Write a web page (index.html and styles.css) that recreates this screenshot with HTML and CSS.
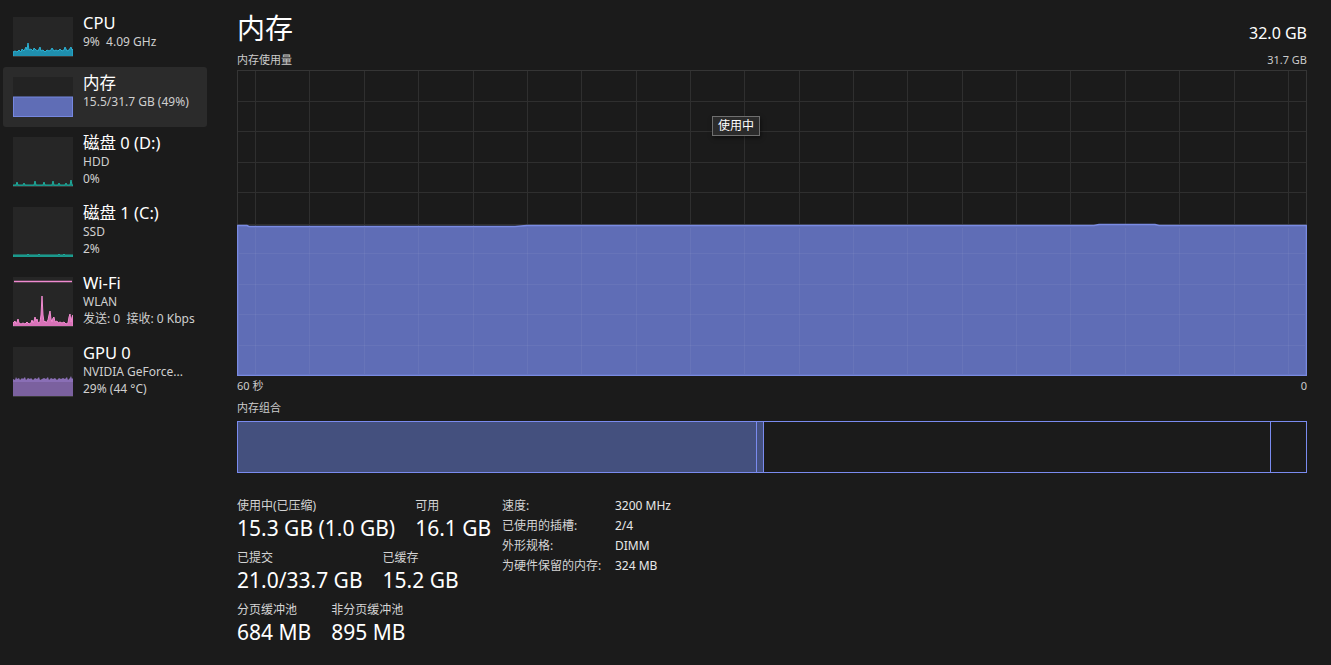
FILE: index.html
```html
<!DOCTYPE html>
<html lang="zh-CN">
<head>
<meta charset="utf-8">
<title>任务管理器 - 内存</title>
<link rel="stylesheet" href="styles.css">
</head>
<body>
<div class="app">
  <nav class="sidebar">
    <div class="item">
      <svg class="thumb" width="60" height="40" viewBox="0 0 60 40">
        <rect x="0" y="0" width="60" height="40" fill="#262626"/>
        <path d="M0,40 L0,35 L2,34 L4,35 L6,33 L8,35 L9,32 L11,34 L13,30 L14,33 L15,26 L16,33 L18,32 L20,34 L21,31 L23,33 L25,34 L27,30 L28,34 L30,33 L32,35 L34,33 L36,34 L38,33 L39,31 L41,34 L43,33 L45,34 L47,32 L49,34 L51,33 L52,30 L54,34 L56,33 L58,30 L59,33 L60,32 L60,40 Z" fill="#1f8fae" stroke="#2cb2d4" stroke-width="1"/>
        <line x1="0" y1="39.5" x2="60" y2="39.5" stroke="#3a3a3a"/>
      </svg>
      <div class="info">
        <div class="name">CPU</div>
        <div class="sub">9%&nbsp; 4.09 GHz</div>
      </div>
    </div>
    <div class="item selected">
      <svg class="thumb" width="60" height="40" viewBox="0 0 60 40">
        <rect x="0" y="0" width="60" height="40" fill="#232323"/>
        <rect x="0.5" y="20" width="59" height="19.5" fill="#5f6db6" stroke="#7587e0" stroke-width="1"/>
      </svg>
      <div class="info">
        <div class="name">内存</div>
        <div class="sub">15.5/31.7 GB (49%)</div>
      </div>
    </div>
    <div class="item tall">
      <svg class="thumb" width="60" height="50" viewBox="0 0 60 50">
        <rect x="0" y="0" width="60" height="50" fill="#262626"/>
        <path d="M0,50 L0,48 L3,48 L4,45 L5,48 L10,48 L11,46 L12,48 L21,48 L22,44 L23,48 L30,48 L31,45 L32,48 L39,48 L40,44 L41,48 L45,48 L46,46 L47,48 L52,48 L53,46 L54,48 L57,48 L58,43 L59,48 L60,48 L60,50 Z" fill="#168a80" stroke="#1fa899" stroke-width="1"/>
        <line x1="0" y1="49.5" x2="60" y2="49.5" stroke="#3a3a3a"/>
      </svg>
      <div class="info">
        <div class="name">磁盘 0 (D:)</div>
        <div class="sub">HDD</div>
        <div class="sub">0%</div>
      </div>
    </div>
    <div class="item tall">
      <svg class="thumb" width="60" height="50" viewBox="0 0 60 50">
        <rect x="0" y="0" width="60" height="50" fill="#262626"/>
        <path d="M0,50 L0,48 L14,48 L15,47 L16,48 L25,48 L26,47 L27,48 L45,48 L46,47 L47,48 L50,48 L51,47 L52,48 L60,48 L60,50 Z" fill="#168a80" stroke="#1fa899" stroke-width="1"/>
      </svg>
      <div class="info">
        <div class="name">磁盘 1 (C:)</div>
        <div class="sub">SSD</div>
        <div class="sub">2%</div>
      </div>
    </div>
    <div class="item tall">
      <svg class="thumb" width="60" height="50" viewBox="0 0 60 50">
        <rect x="0" y="0" width="60" height="50" fill="#262626"/>
        <line x1="1" y1="4.5" x2="59" y2="4.5" stroke="#f08ad0" stroke-width="1.5"/>
        <path d="M0,50 L0,46 L2,44 L3,47 L4,45 L5,42 L6,46 L8,47 L10,46 L12,47 L14,45 L16,47 L18,46 L19,43 L20,46 L21,44 L22,40 L23,44 L24,42 L25,46 L27,45 L28,38 L29,19 L30,38 L31,45 L32,44 L33,46 L35,43 L36,38 L37,34 L38,42 L39,45 L40,41 L41,40 L42,45 L44,44 L45,46 L47,45 L49,46 L51,45 L53,47 L55,46 L56,40 L57,37 L58,45 L59,40 L60,38 L60,50 Z" fill="#d872b8" stroke="#f08ad0" stroke-width="1"/>
        <line x1="0" y1="49.5" x2="60" y2="49.5" stroke="#3a3a3a"/>
      </svg>
      <div class="info">
        <div class="name">Wi-Fi</div>
        <div class="sub">WLAN</div>
        <div class="sub">发送: 0&nbsp; 接收: 0 Kbps</div>
      </div>
    </div>
    <div class="item tall">
      <svg class="thumb" width="60" height="50" viewBox="0 0 60 50">
        <rect x="0" y="0" width="60" height="50" fill="#262626"/>
        <path d="M0,50 L0,32 L2,33 L3,30 L4,32 L6,31 L7,33 L9,31 L10,32 L12,30 L13,33 L15,31 L17,32 L18,31 L20,33 L22,31 L24,32 L26,30 L27,33 L29,32 L31,31 L33,32 L35,30 L36,33 L38,31 L40,32 L42,31 L44,33 L46,31 L48,32 L50,31 L52,32 L54,30 L55,33 L57,31 L58,29 L59,32 L60,31 L60,50 Z" fill="#8a6fb6" />
        <path d="M0,50 L0,35 L60,35 L60,50 Z" fill="#7b619f"/>
        <line x1="0" y1="49.5" x2="60" y2="49.5" stroke="#3a3a3a"/>
      </svg>
      <div class="info">
        <div class="name">GPU 0</div>
        <div class="sub">NVIDIA GeForce...</div>
        <div class="sub">29% (44 °C)</div>
      </div>
    </div>
  </nav>

  <main class="main">
    <header class="header">
      <h1 class="title">内存</h1>
      <div class="total">32.0 GB</div>
    </header>
    <div class="subheader">
      <span>内存使用量</span>
      <span>31.7 GB</span>
    </div>
    <div class="graph">
      <svg width="1070" height="306" viewBox="0 0 1070 306" shape-rendering="crispEdges">
        <g stroke="#2f2f2f" stroke-width="1">
          <line x1="18.5" y1="0" x2="18.5" y2="306"/>
          <line x1="72.5" y1="0" x2="72.5" y2="306"/>
          <line x1="127.5" y1="0" x2="127.5" y2="306"/>
          <line x1="181.5" y1="0" x2="181.5" y2="306"/>
          <line x1="236.5" y1="0" x2="236.5" y2="306"/>
          <line x1="290.5" y1="0" x2="290.5" y2="306"/>
          <line x1="344.5" y1="0" x2="344.5" y2="306"/>
          <line x1="399.5" y1="0" x2="399.5" y2="306"/>
          <line x1="453.5" y1="0" x2="453.5" y2="306"/>
          <line x1="507.5" y1="0" x2="507.5" y2="306"/>
          <line x1="562.5" y1="0" x2="562.5" y2="306"/>
          <line x1="616.5" y1="0" x2="616.5" y2="306"/>
          <line x1="670.5" y1="0" x2="670.5" y2="306"/>
          <line x1="725.5" y1="0" x2="725.5" y2="306"/>
          <line x1="779.5" y1="0" x2="779.5" y2="306"/>
          <line x1="833.5" y1="0" x2="833.5" y2="306"/>
          <line x1="888.5" y1="0" x2="888.5" y2="306"/>
          <line x1="942.5" y1="0" x2="942.5" y2="306"/>
          <line x1="997.5" y1="0" x2="997.5" y2="306"/>
          <line x1="1051.5" y1="0" x2="1051.5" y2="306"/>
          <line x1="0" y1="31.5" x2="1070" y2="31.5"/>
          <line x1="0" y1="61.5" x2="1070" y2="61.5"/>
          <line x1="0" y1="92.5" x2="1070" y2="92.5"/>
          <line x1="0" y1="122.5" x2="1070" y2="122.5"/>
          <line x1="0" y1="154.5" x2="1070" y2="154.5"/>
          <line x1="0" y1="183.5" x2="1070" y2="183.5"/>
          <line x1="0" y1="214.5" x2="1070" y2="214.5"/>
          <line x1="0" y1="244.5" x2="1070" y2="244.5"/>
          <line x1="0" y1="275.5" x2="1070" y2="275.5"/>
        </g>
        <rect x="0.5" y="0.5" width="1069" height="305" fill="none" stroke="#353535"/>
        <path d="M0.5,305.5 L0.5,155.5 L10,155.5 L12,156.5 L278,156.5 L290,155.5 L857,155.5 L862,154.5 L918,154.5 L922,155.5 L1069.5,155.5 L1069.5,305.5 Z" fill="#5f6db6" stroke="#7a8be2" stroke-width="1.5" shape-rendering="auto"/>
        <g stroke="#ffffff" stroke-opacity="0.05" stroke-width="1">
          <line x1="18.5" y1="158" x2="18.5" y2="304"/>
          <line x1="72.5" y1="158" x2="72.5" y2="304"/>
          <line x1="127.5" y1="158" x2="127.5" y2="304"/>
          <line x1="181.5" y1="158" x2="181.5" y2="304"/>
          <line x1="236.5" y1="158" x2="236.5" y2="304"/>
          <line x1="290.5" y1="158" x2="290.5" y2="304"/>
          <line x1="344.5" y1="158" x2="344.5" y2="304"/>
          <line x1="399.5" y1="158" x2="399.5" y2="304"/>
          <line x1="453.5" y1="158" x2="453.5" y2="304"/>
          <line x1="507.5" y1="158" x2="507.5" y2="304"/>
          <line x1="562.5" y1="158" x2="562.5" y2="304"/>
          <line x1="616.5" y1="158" x2="616.5" y2="304"/>
          <line x1="670.5" y1="158" x2="670.5" y2="304"/>
          <line x1="725.5" y1="158" x2="725.5" y2="304"/>
          <line x1="779.5" y1="158" x2="779.5" y2="304"/>
          <line x1="833.5" y1="158" x2="833.5" y2="304"/>
          <line x1="888.5" y1="158" x2="888.5" y2="304"/>
          <line x1="942.5" y1="158" x2="942.5" y2="304"/>
          <line x1="997.5" y1="158" x2="997.5" y2="304"/>
          <line x1="1051.5" y1="158" x2="1051.5" y2="304"/>
          <line x1="2" y1="183.5" x2="1068" y2="183.5"/>
          <line x1="2" y1="214.5" x2="1068" y2="214.5"/>
          <line x1="2" y1="244.5" x2="1068" y2="244.5"/>
          <line x1="2" y1="275.5" x2="1068" y2="275.5"/>
        </g>
      </svg>
      <div class="tooltip">使用中</div>
    </div>
    <div class="axis">
      <span>60 秒</span>
      <span>0</span>
    </div>
    <div class="comp-label">内存组合</div>
    <div class="comp-bar">
      <div class="seg inuse"></div>
      <div class="seg modified"></div>
      <div class="seg standby"></div>
      <div class="seg free"></div>
    </div>

    <section class="stats">
      <div class="stats-left">
        <div class="stat-row">
          <div class="stat"><div class="label">使用中(已压缩)</div><div class="value">15.3 GB (1.0 GB)</div></div>
          <div class="stat"><div class="label">可用</div><div class="value">16.1 GB</div></div>
        </div>
        <div class="stat-row">
          <div class="stat"><div class="label">已提交</div><div class="value">21.0/33.7 GB</div></div>
          <div class="stat"><div class="label">已缓存</div><div class="value">15.2 GB</div></div>
        </div>
        <div class="stat-row">
          <div class="stat"><div class="label">分页缓冲池</div><div class="value">684 MB</div></div>
          <div class="stat"><div class="label">非分页缓冲池</div><div class="value">895 MB</div></div>
        </div>
      </div>
      <dl class="details">
        <dt>速度:</dt><dd>3200 MHz</dd>
        <dt>已使用的插槽:</dt><dd>2/4</dd>
        <dt>外形规格:</dt><dd>DIMM</dd>
        <dt>为硬件保留的内存:</dt><dd>324 MB</dd>
      </dl>
    </section>
  </main>
</div>
</body>
</html>
```

FILE: styles.css
```css
* { box-sizing: border-box; }

html, body {
  margin: 0;
  padding: 0;
  background: #1b1b1b;
  color: #ffffff;
  font-family: "Segoe UI", "Noto Sans", "Noto Sans CJK SC", sans-serif;
  height: 100%;
  overflow: hidden;
}

.app {
  display: flex;
  align-items: flex-start;
}

/* ---------- sidebar ---------- */
.sidebar {
  width: 204px;
  margin-left: 3px;
  padding-top: 7px;
  display: flex;
  flex-direction: column;
  flex-shrink: 0;
}

.item {
  display: flex;
  align-items: flex-start;
  gap: 10px;
  padding: 10px;
  height: 60px;
  border-radius: 3px;
}

.item.tall { height: 70px; }

.item.selected { background: #2b2b2b; }

.thumb {
  display: block;
  flex-shrink: 0;
}

.info {
  margin-top: -5px;
  white-space: nowrap;
}

.name {
  font-size: 16.5px;
  line-height: 21px;
  color: #ffffff;
}

.sub {
  font-size: 12px;
  line-height: 17px;
  color: #cfcfcf;
}

/* ---------- main ---------- */
.main {
  margin-left: 30px;
  width: 1070px;
  flex-shrink: 0;
}

.header {
  display: flex;
  justify-content: space-between;
  align-items: baseline;
  height: 50px;
  padding-top: 10px;
}

.title {
  margin: 0;
  font-size: 28px;
  line-height: 36px;
  font-weight: 400;
}

.total {
  font-size: 16px;
  line-height: 20px;
}

.subheader {
  display: flex;
  justify-content: space-between;
  height: 20px;
  font-size: 11px;
  line-height: 20px;
  color: #cccccc;
}

.graph {
  position: relative;
  height: 306px;
}

.graph svg { display: block; }

.tooltip {
  position: absolute;
  left: 475px;
  top: 46px;
  height: 20px;
  padding: 0 5px;
  border: 1px solid #6f6f6f;
  background: #2b2b2b;
  font-size: 12px;
  line-height: 18px;
  color: #ffffff;
  box-shadow: 1px 2px 4px rgba(0, 0, 0, 0.5);
}

.axis {
  display: flex;
  justify-content: space-between;
  height: 20px;
  font-size: 11px;
  line-height: 20px;
  color: #cccccc;
}

.comp-label {
  margin-top: 4px;
  font-size: 11px;
  line-height: 16px;
  color: #cccccc;
}

.comp-bar {
  display: flex;
  margin-top: 5px;
  height: 52px;
  border: 1px solid #7a8bef;
}

.seg {
  height: 100%;
  border-right: 1px solid #7a8bef;
}

.seg.inuse { width: 519px; background: #44507e; }
.seg.modified { width: 7px; background: #44507e; }
.seg.standby { width: 507px; }
.seg.free { flex: 1; border-right: 0; }

/* ---------- stats ---------- */
.stats {
  display: flex;
  margin-top: 23px;
}

.stats-left {
  width: 265px;
  flex-shrink: 0;
  padding-top: 2px;
}

.stat-row {
  display: flex;
  gap: 20px;
  margin-bottom: 8px;
}

.stat .label {
  font-size: 12px;
  line-height: 16px;
  color: #d4d4d4;
  white-space: nowrap;
}

.stat .value {
  font-size: 21px;
  line-height: 28px;
  color: #ffffff;
  white-space: nowrap;
}

.details {
  display: grid;
  grid-template-columns: 113px auto;
  grid-auto-rows: 20px;
  margin: 0;
  font-size: 12px;
  line-height: 20px;
  color: #d4d4d4;
}

.details dt, .details dd {
  margin: 0;
  white-space: nowrap;
}

.details dd { color: #e8e8e8; }
```
